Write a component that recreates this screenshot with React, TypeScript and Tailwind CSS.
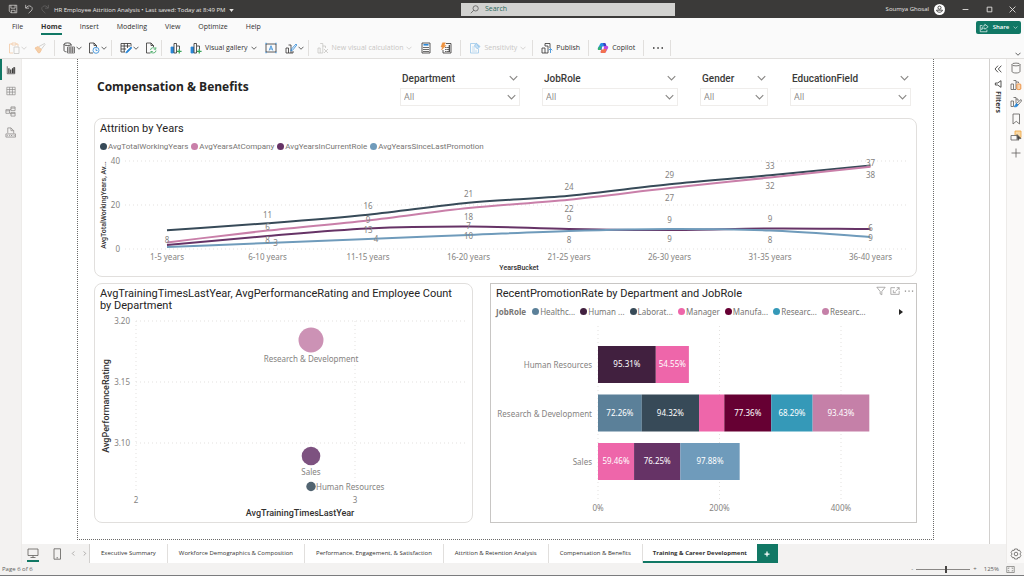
import type { ReactNode } from "react"

const UI = "font-['Open_Sans','Noto_Sans',sans-serif]"

function Icon({ children, className = "size-3", box = 12 }: { children: ReactNode; className?: string; box?: number }) {
  return (
    <svg viewBox={`0 0 ${box} ${box}`} className={`shrink-0 ${className}`} fill="none" stroke="currentColor" strokeWidth="0.8" aria-hidden="true">
      {children}
    </svg>
  )
}

function Chevron({ className = "w-[6px] h-[4px]" }: { className?: string }) {
  return (
    <svg viewBox="0 0 12 8" className={`shrink-0 ${className}`} fill="none" stroke="currentColor" strokeWidth="1.500" aria-hidden="true">
      <path d="M1 1.500 6 6.500 11 1.500" />
    </svg>
  )
}

/* ---------- icons ---------- */

const SaveIcon = () => (
  <Icon className="size-[10px]">
    <path d="M1.500 1.500h9v9h-7l-2-2zM3.500 1.500v3.500h5V1.500M4 10.500V7.500h4.500v3" />
  </Icon>
)
const UndoIcon = () => (
  <Icon className="size-[10px]">
    <path d="M2 1v4h4M2.200 4.800C4 2.200 6.500 1.600 8.500 3s1.700 3.800 0 5.400L5.500 11" />
  </Icon>
)
const RedoIcon = () => (
  <Icon className="size-[10px] text-[#6b6a69]">
    <path d="M10 1v4H6M9.800 4.800C8 2.200 5.500 1.600 3.500 3s-1.700 3.800 0 5.400L6.500 11" />
  </Icon>
)
const PasteIcon = () => (
  <Icon>
    <path d="M4 2H1.500v9H5M8 2h2v2.500M4 1h4v2H4z" stroke="#f3c9a5" />
    <path d="M6 5h5v6.500H6z" stroke="#c8c6c4" />
  </Icon>
)
const BrushIcon = () => (
  <Icon>
    <path d="M1 6l3-1.500 3.500 3L6 10.500 4.500 11z" fill="#f6cfa8" stroke="#f0c096" />
    <path d="M5 4.500 10.500 1.500 11 2.500 7.500 7" stroke="#c8c6c4" />
  </Icon>
)
const GetDataIcon = () => (
  <Icon>
    <ellipse cx="4.500" cy="2.200" rx="3.500" ry="1.300" />
    <path d="M1 2.200v6.300c0 .8 1.200 1.200 2.500 1.300M8 2.200v2" />
    <path d="M4.500 5h7v6h-7zM4.500 7h7M4.500 9h7M7 5v6M9.300 5v6" strokeWidth=".6" />
  </Icon>
)
const RecentIcon = () => (
  <Icon>
    <path d="M5 11H1.500V1H6l2.500 2.500V5M6 1v2.500h2.500" />
    <circle cx="8" cy="8.300" r="3" stroke="#2b88d8" />
    <path d="M8 6.500v2h1.500" stroke="#2b88d8" />
  </Icon>
)
const TransformIcon = () => (
  <Icon>
    <path d="M1 1.500h10v3M1 1.500V10h4M1 4h9M1 7h5M4.200 1.500V10M7.500 1.500V6" />
    <path d="M11 5 6.500 9.500 5.800 11l1.600-.6L11.800 6z" fill="#2b88d8" stroke="#2b88d8" />
  </Icon>
)
const RefreshIcon = () => (
  <Icon>
    <path d="M5 11H1.500V1H6l2.500 2.500V5M6 1v2.500h2.500" />
    <path d="M5.500 8a2.700 2.700 0 0 1 5-1M10.800 5.200V7.200H8.800M11 8.500a2.700 2.700 0 0 1-5 1.200M5.800 11.500V9.500h2" stroke="#3ba55c" />
  </Icon>
)
const NewVisualIcon = () => (
  <Icon>
    <path d="M1 5h2.600v6H1z" fill="#2b88d8" stroke="#2b88d8" />
    <path d="M4 1.500h2.500V11H4zM7 4h2.500v3" />
    <path d="M9.300 7v4.500M7 9.300h4.600" stroke="#3ba55c" strokeWidth="1.300" />
  </Icon>
)
const TextBoxIcon = () => (
  <Icon>
    <path d="M1 2h10v8H1z" />
    <path d="M4.200 8.500 6 3.700 7.800 8.500M4.800 7h2.400" stroke="#2b88d8" />
    <path d="M.5 1.500h1M10.500 1.500h1M.5 10.500h1M10.500 10.500h1" stroke="#2b88d8" strokeWidth="1.500" />
  </Icon>
)
const ShapesIcon = () => (
  <Icon>
    <path d="M1 6h2.500v5H1zM3.500 3H6v8H3.500M8 9v2H6" />
    <path d="M11 2 6.500 7 5.800 9l1.800-.8L11.800 3z" stroke="#2b88d8" />
  </Icon>
)
const VisualCalcIcon = () => (
  <Icon>
    <path d="M1 6h2.200v5H1zM3.200 1.500h2.600V11H3.200M8.500 6V4H5.800" />
    <path d="m7 7 4 4M11 7l-4 4" />
  </Icon>
)
const CalculatorIcon = () => (
  <Icon>
    <path d="M2 1h8v10H2z" />
    <path d="M3.500 2.800h5" stroke="#2b88d8" strokeWidth="1.600" />
    <path d="M3.300 5.500h1.400M5.300 5.500h1.400M7.300 5.500h1.400M3.300 7.500h1.400M5.300 7.500h1.400M7.300 7.500h1.400M3.300 9.500h1.400M5.300 9.500h1.400M7.300 9.500h1.400" strokeWidth="1.100" />
  </Icon>
)
const QuickMeasureIcon = () => (
  <Icon>
    <path d="M6 1.500h5v9.500H3V8" />
    <path d="M5.300 5.500h1.200M7.300 5.500h1.200M5.300 7.500h1.200M7.300 7.500h1.200M5.300 9.500h1.200M7.300 9.500h1.200M9.300 3v7" strokeWidth="1.100" />
    <path d="M2.500.8h3L4 3.500h2L1.500 8l1-3H1z" fill="#f0953f" stroke="#e8822a" strokeWidth=".4" />
  </Icon>
)
const SensitivityIcon = () => (
  <Icon>
    <path d="M6 1.500H1.500v9.500h8V7" stroke="#9cc8ea" />
    <path d="M3 5h3M3 7h3M3 9h5" stroke="#b5d6ef" />
    <path d="m7 1 4 3.500L8.500 7 5.500 4zM8 2.500 10 5" fill="#c7e0f4" stroke="#8fc1e8" />
  </Icon>
)
const PublishIcon = () => (
  <Icon>
    <path d="M1 6h3v5H1zM4 4h3v7H4M4 4V1.500h5V6" />
    <path d="M9.500 11V6.500M7.700 8.300l1.800-1.800 1.800 1.800" stroke="#2b88d8" />
  </Icon>
)
const CopilotIcon = () => (
  <Icon>
    <path d="M3 2.200C3.600 1.200 4 1 5 1h2.500c.8 0 1 .6.700 1.500L7 6.500 4.500 8H1.800C.8 8 .6 7 .9 6z" fill="#2a8fe6" stroke="none" />
    <path d="M1 6.500 2 4.500h2.500L3.500 8H1.800C1 8 .7 7.300 1 6.500z" fill="#35b26b" stroke="none" />
    <path d="M7.500 1c.8 0 1.200.5 1.500 1.500l.5 1.500H7L6 1z" fill="#3a3fc4" stroke="none" />
    <path d="M9 9.800C8.500 10.800 8 11 7 11H4.500c-.8 0-1-.6-.7-1.500L5 5.500 7.500 4h2.700c1 0 1.200 1 .9 2z" fill="#c04adf" stroke="none" />
    <path d="M4 8.500 5 7h4.500L9 9.800C8.500 10.800 8 11 7 11H4.500C3.500 11 3.500 9.500 4 8.500z" fill="#f2724f" stroke="none" />
    <path d="M5.200 4.500h1.800L6.500 7.500H4.800z" fill="#fff" stroke="none" />
  </Icon>
)
const ShareIcon = () => (
  <Icon className="size-[10px]">
    <path d="M4 3H1.500v7.500h8V8M7 1.500l4 3-4 3V6C5 6 4 6.500 3.200 8 3.400 5 4.800 3.300 7 3.200z" />
  </Icon>
)
const ReportViewIcon = () => (
  <Icon className="size-[10px] text-[#3b3a39]">
    <path d="M1.500 1.500v9h9V3" />
    <path d="M3.500 10V4M5.700 10V5.500M7.900 10V4M9.700 10V2.500" strokeWidth="1.500" />
  </Icon>
)
const TableViewIcon = () => (
  <Icon className="size-[10px]">
    <path d="M1 1.500h10v9H1zM1 4.200h10M1 7.300h10M4.300 1.500v9M7.700 1.500v9" />
  </Icon>
)
const ModelViewIcon = () => (
  <Icon className="size-[11px]">
    <path d="M6.500 1h4.500v4H6.500zM6.500 7h4.500v4H6.500zM1 4h4v4H1zM5 5l1.500-2M5 7l1.500 2M6.500 2.300H11M6.500 8.300H11M1 5.300h4" />
  </Icon>
)
const DaxViewIcon = () => (
  <Icon className="size-[11px]">
    <path d="M3 6.500V1h3.500L9.500 4v3M6.500 1v3h3M1 7.500h10.500V11H1z" />
    <path d="M2.500 8.500v1.500M5 8.500v1.500M6.500 8.500l1.500 1.500M8 8.500 6.500 10M10 8.500v1.500" />
  </Icon>
)
const DataPaneIcon = () => (
  <Icon>
    <ellipse cx="6" cy="2.500" rx="4" ry="1.400" />
    <path d="M2 2.500v7c0 .8 1.800 1.500 4 1.500s4-.7 4-1.500v-7" />
  </Icon>
)
const BuildIcon = () => (
  <Icon>
    <path d="M1 5h2.500v5.500H1zM3.500 1.500H6v9H3.500M8.500 4V3H6" />
    <path d="M6.800 5.500c0-.8 4-.8 4 0v4.500c0 .8-4 .8-4 0z" fill="#f9d3ae" stroke="#e8822a" />
  </Icon>
)
const FormatIcon = () => (
  <Icon>
    <path d="M1 5h2.500v5.500H1zM3.500 1.500H6v6M6 3h2v2" />
    <path d="M11 3.500 6.500 7.500 8 9l3.500-4z" />
    <path d="M6.500 7.500 8 9c-.5 1.800-2.300 2-4 1.700C5.500 10 5.300 8.500 6.500 7.500z" fill="#2b88d8" stroke="#2b88d8" />
  </Icon>
)
const BookmarkIcon = () => (
  <Icon>
    <path d="M3 1h6.500v10L6.200 8.300 3 11z" />
  </Icon>
)
const SelectionIcon = () => (
  <Icon>
    <path d="M5 1h6v6.500H5z" fill="#fad9a5" stroke="#eda33c" />
    <path d="M1 5.500h6V10H1z" fill="#faf9f8" />
    <path d="m7 4.500 4 4-2 .2L8 10.500z" fill="#444" />
  </Icon>
)
const GearIcon = () => (
  <Icon className="size-[12px]">
    <path d="M4.600 1h2.800l.5 1.500 1.600-.3 1.400 2.400L9.900 6l1 1.400-1.400 2.400-1.600-.3L7.400 11H4.600l-.5-1.500-1.600.3L1.100 7.400 2.100 6l-1-1.400 1.400-2.400 1.600.3z" />
    <circle cx="6" cy="6" r="1.800" />
  </Icon>
)

/* ---------- title bar and ribbon ---------- */

function TitleBar() {
  return (
    <header className="flex h-[18px] items-center bg-[#3b3a39] text-[6px] text-[#e8e6e4]">
      <div className="flex flex-[462_1_0] items-center pl-2">
        <button aria-label="Save"><SaveIcon /></button>
        <button aria-label="Undo" className="ml-[6px]"><UndoIcon /></button>
        <button aria-label="Redo" className="ml-[6px]"><RedoIcon /></button>
        <button className="ml-1 flex items-center gap-1 whitespace-nowrap pt-[3px]">
          HR Employee Attrition Analysis • Last saved: Today at 8:49 PM
          <svg viewBox="0 0 6 4" className="h-[3px] w-[5px]" fill="currentColor"><path d="M0 0h6L3 4z" /></svg>
        </button>
      </div>
      <label className="flex h-[13px] w-[214px] items-center gap-[6px] bg-[#d2d2d0] pl-[9px]">
        <svg viewBox="0 0 12 12" className="size-[9px] shrink-0 text-[#555]" fill="none" stroke="currentColor" aria-hidden="true">
          <circle cx="7.500" cy="4.500" r="3.500" />
          <path d="M5 7 1 11" />
        </svg>
        <input aria-label="Search" placeholder="Search" className="min-w-0 flex-1 bg-transparent text-[7px] outline-none placeholder:text-[#2b6a5e]" />
      </label>
      <div className="flex flex-[348_1_0] items-center justify-end pr-[8px]">
        <span>Soumya Ghosal</span>
        <svg viewBox="0 0 12 12" className="ml-[5px] size-[11px]" fill="none" stroke="#3b3a39" aria-hidden="true">
          <circle cx="6" cy="6" r="6" fill="#fff" stroke="none" />
          <circle cx="6" cy="4" r="1.700" />
          <path d="M2.800 6.700h6.400c0 3-6.400 3-6.400 0z" />
        </svg>
        <button aria-label="Minimize" className="ml-[17px]"><Icon className="size-[7px]"><path d="M1 6h10" strokeWidth="1.500" /></Icon></button>
        <button aria-label="Maximize" className="ml-[17px]"><Icon className="size-[7px]"><path d="M2 2h8v8H2z" strokeWidth="1.500" /></Icon></button>
        <button aria-label="Close" className="ml-[16px]"><Icon className="size-[7px]"><path d="m1 1 10 10M11 1 1 11" strokeWidth="1.500" /></Icon></button>
      </div>
    </header>
  )
}

const menus = ["File", "Home", "Insert", "Modeling", "View", "Optimize", "Help"]

function Tool({ label, icon, text, menu, disabled }: { label: string; icon: ReactNode; text?: string; menu?: boolean; disabled?: boolean }) {
  return (
    <button aria-label={label} disabled={disabled} className="flex items-center gap-px whitespace-nowrap disabled:text-[#c8c6c4]">
      {icon}
      {text && <span className="px-[2px]">{text}</span>}
      {menu && <Chevron />}
    </button>
  )
}

function Group({ children, className = "gap-[7px] pr-2" }: { children: ReactNode; className?: string }) {
  return <div className={`flex h-4 items-center border-r border-[#e1dfdd] pl-2 ${className}`}>{children}</div>
}

function Ribbon() {
  return (
    <div className="border-b border-[#e1dfdd] bg-[#fafafa] text-[7px] text-[#323130]">
      <div className="flex h-[19px] items-center justify-between pl-[12px] pr-[3px]">
        <nav className="flex gap-[18px]">
          {menus.map((m) => (
            <a key={m} href="#" className={m === "Home" ? "border-b-2 border-[#117865] font-bold leading-[13px]" : "border-b-2 border-transparent leading-[13px]"}>
              {m}
            </a>
          ))}
        </nav>
        <button className="flex h-[13px] w-[45px] items-center justify-center gap-[4px] rounded-xs bg-[#117865] text-[6px] font-semibold text-white">
          <ShareIcon />
          Share
          <Chevron className="h-[3px] w-[5px]" />
        </button>
      </div>
      <div className="flex h-[21px] items-center pt-px">
        <Group>
          <Tool label="Paste" icon={<PasteIcon />} menu disabled />
          <Tool label="Format painter" icon={<BrushIcon />} disabled />
        </Group>
        <Group className="gap-[6px] pr-1">
          <Tool label="Get data" icon={<GetDataIcon />} menu />
          <Tool label="Recent sources" icon={<RecentIcon />} menu />
        </Group>
        <Group className="gap-[6px] pr-1">
          <Tool label="Transform data" icon={<TransformIcon />} menu />
          <Tool label="Refresh" icon={<RefreshIcon />} />
        </Group>
        <Group className="gap-2 pr-1">
          <Tool label="New visual" icon={<NewVisualIcon />} />
          <Tool label="Visual gallery" icon={<NewVisualIcon />} text="Visual gallery" menu />
          <Tool label="Text box" icon={<TextBoxIcon />} />
          <Tool label="Shapes" icon={<ShapesIcon />} menu />
        </Group>
        <Group className="gap-2 pr-2">
          <Tool label="New visual calculation" icon={<VisualCalcIcon />} text="New visual calculation" menu disabled />
          <Tool label="New measure" icon={<CalculatorIcon />} />
          <Tool label="Quick measure" icon={<QuickMeasureIcon />} />
        </Group>
        <Group className="pr-[6px]">
          <Tool label="Sensitivity" icon={<SensitivityIcon />} text="Sensitivity" menu disabled />
        </Group>
        <Group className="pr-[6px]">
          <Tool label="Publish" icon={<PublishIcon />} text="Publish" />
        </Group>
        <Group className="pr-[6px]">
          <Tool label="Copilot" icon={<CopilotIcon />} text="Copilot" />
        </Group>
        <Group className="pr-[6px]">
          <Tool label="More" icon={<Icon><path d="M1 6h1.500M5.300 6h1.500M9.500 6H11" strokeWidth="1.600" /></Icon>} />
        </Group>
        <button aria-label="Collapse ribbon" className="ml-auto mr-[3px] self-end pb-[2px]"><Chevron /></button>
      </div>
    </div>
  )
}

/* ---------- report page ---------- */

const slicers = [
  { name: "Department", width: "w-[120px]" },
  { name: "JobRole", width: "w-[136px]" },
  { name: "Gender", width: "w-[68px]" },
  { name: "EducationField", width: "w-[121px]" },
]

function Slicer({ name, width }: { name: string; width: string }) {
  return (
    <div className={width}>
      <div className="flex h-[20px] items-center justify-between px-[2px] text-[#8a8886]">
        <label htmlFor={name} className="font-['Roboto',sans-serif] text-[10px] font-medium text-[#3b3a39]">{name}</label>
        <Chevron className="h-[6px] w-[9px]" />
      </div>
      <div className="relative flex h-[18px] items-center border border-[#efedeb] text-[#8a8886]">
        <select id={name} className="h-full w-full appearance-none bg-transparent pl-[3px] text-[9px] outline-none">
          <option>All</option>
        </select>
        <Chevron className="pointer-events-none absolute right-[3px] h-[6px] w-[9px]" />
      </div>
    </div>
  )
}

const titleStyle = "font-['Roboto',sans-serif] text-[11px] leading-[12px] text-[#252423] pt-[4px]"
const chartText = "font-['Noto_Sans',sans-serif] text-[8px]"

function Dot({ color }: { color: string }) {
  return <span className="size-[7px] shrink-0 rounded-full" style={{ background: color }} />
}

const X0 = 72
const STEP = 100.5
const ZERO = 94
const PER_UNIT = 2.2

const series = [
  { name: "AvgTotalWorkingYears", color: "#374a58", values: [8.5, 11.7, 15.6, 21, 24.2, 29.4, 33.5, 38] },
  { name: "AvgYearsAtCompany", color: "#c97fa9", values: [3, 8.4, 13, 18.6, 22.4, 27.7, 32.5, 37.4] },
  { name: "AvgYearsInCurrentRole", color: "#663366", values: [1.8, 5.9, 9.3, 10.2, 9.1, 8.6, 9.3, 9.1] },
  { name: "AvgYearsSinceLastPromotion", color: "#6f9bbb", values: [0.9, 2.7, 4.6, 6.4, 8.2, 9.1, 8.4, 5.5] },
]

const buckets = ["1-5 years", "6-10 years", "11-15 years", "16-20 years", "21-25 years", "26-30 years", "31-35 years", "36-40 years"]

// [text, y, x shift] for each bucket
const pointLabels: [string, number, number?][][] = [
  [["8", 88]],
  [["11", 63], ["6", 75], ["8", 88], ["3", 91, 8]],
  [["16", 54], ["9", 68], ["13", 78], ["4", 87, 8]],
  [["21", 42], ["18", 65], ["7", 74], ["10", 84]],
  [["24", 35], ["22", 57], ["9", 67], ["8", 88]],
  [["29", 23], ["27", 46], ["9", 68], ["9", 87]],
  [["33", 14], ["32", 34], ["9", 67], ["8", 88]],
  [["37", 11], ["38", 23], ["6", 76], ["9", 86]],
]

function smoothPath(values: number[]) {
  const pts = values.map((v, i) => [X0 + i * STEP, ZERO - v * PER_UNIT])
  const slope = (i: number) => {
    const a = Math.max(0, i - 1)
    const b = Math.min(pts.length - 1, i + 1)
    return (pts[b][1] - pts[a][1]) / (pts[b][0] - pts[a][0])
  }
  let d = `M${pts[0][0]} ${pts[0][1]}`
  for (let i = 1; i < pts.length; i++) {
    const [px, py] = pts[i - 1]
    const [x, y] = pts[i]
    const h = STEP / 3
    d += `C${px + h} ${py + slope(i - 1) * h} ${x - h} ${y - slope(i) * h} ${x} ${y}`
  }
  return d
}

function AttritionCard() {
  return (
    <section className="rounded-lg border border-[#e1dfdd] bg-white">
      <h2 className={`${titleStyle} px-[5px]`}>Attrition by Years</h2>
      <ul className="flex h-[20px] items-center gap-[3px] px-[5px] pt-[3px] font-['Roboto',sans-serif] text-[8px] text-[#777573]">
        {series.map((s) => (
          <li key={s.name} className="flex items-center gap-px">
            <Dot color={s.color} />
            {s.name}
          </li>
        ))}
      </ul>
      <svg viewBox="0 0 821 121" className={`block w-full ${chartText}`} fill="#858381" role="img" aria-label="Attrition by Years">
        {[0, 20, 40].map((t) => (
          <g key={t}>
            <line x1="30" x2="814" y1={ZERO - t * PER_UNIT} y2={ZERO - t * PER_UNIT} stroke="#e3e1df" strokeDasharray="1 3" />
            <text x="25" y={ZERO + 3 - t * PER_UNIT} textAnchor="end">{t}</text>
          </g>
        ))}
        {series.map((s) => (
          <path key={s.name} d={smoothPath(s.values)} fill="none" stroke={s.color} strokeWidth="2" />
        ))}
        {pointLabels.map((labels, i) =>
          labels.map(([text, y, dx = 0]) => (
            <text key={text + y} x={X0 + i * STEP + dx} y={y} textAnchor="middle">{text}</text>
          )),
        )}
        {buckets.map((b, i) => (
          <text key={b} x={X0 + i * STEP} y="105" textAnchor="middle">{b}</text>
        ))}
        <text x="424" y="115" textAnchor="middle" className="font-['Roboto',sans-serif] text-[7px] font-medium" fill="#323130">YearsBucket</text>
        <text transform="translate(11 50) rotate(-90)" textAnchor="middle" className="font-['Roboto',sans-serif] text-[7px] font-medium" fill="#323130">AvgTotalWorkingYears, Av...</text>
      </svg>
    </section>
  )
}

function TrainingCard() {
  return (
    <section className="rounded-lg border border-[#e1dfdd] bg-white">
      <h2 className={`${titleStyle} pl-[5px] pr-3`}>AvgTrainingTimesLastYear, AvgPerformanceRating and Employee Count by Department</h2>
      <svg viewBox="0 1 377 210" className={`block w-full ${chartText}`} fill="#858381" role="img" aria-label="Training times and performance rating by department">
        {["3.20", "3.15", "3.10"].map((t, i) => (
          <g key={t}>
            <line x1="41" x2="370" y1={10 + i * 61} y2={10 + i * 61} stroke="#e3e1df" strokeDasharray="1 3" />
            <text x="35" y={13 + i * 61} textAnchor="end">{t}</text>
          </g>
        ))}
        {["2", "3"].map((t, i) => (
          <g key={t}>
            <line x1={41 + i * 219} x2={41 + i * 219} y1="10" y2="182" stroke="#e3e1df" strokeDasharray="1 3" />
            <text x={41 + i * 219} y="192" textAnchor="middle">{t}</text>
          </g>
        ))}
        <circle cx="216" cy="29" r="12.500" fill="#cc92b5" />
        <text x="216" y="51" textAnchor="middle">Research &amp; Development</text>
        <circle cx="216" cy="145" r="9.300" fill="#7d5280" />
        <text x="216" y="164" textAnchor="middle">Sales</text>
        <circle cx="216" cy="175.500" r="4.700" fill="#526471" />
        <text x="221" y="179">Human Resources</text>
        <text x="205" y="205" textAnchor="middle" className="font-['Roboto',sans-serif] text-[9px] font-medium" fill="#323130">AvgTrainingTimesLastYear</text>
        <text transform="translate(14 95) rotate(-90)" textAnchor="middle" className="font-['Roboto',sans-serif] text-[9px] font-medium" fill="#323130">AvgPerformanceRating</text>
      </svg>
    </section>
  )
}

const roles = [
  { name: "Healthc...", color: "#5b8099" },
  { name: "Human ...", color: "#41203f" },
  { name: "Laborat...", color: "#374a58" },
  { name: "Manager", color: "#ee66aa" },
  { name: "Manufa...", color: "#660033" },
  { name: "Researc...", color: "#3599b8" },
  { name: "Researc...", color: "#c580a8" },
]

const PCT = 0.6065

const departments = [
  { name: "Human Resources", parts: [[95.31, "#41203f"], [54.55, "#ee66aa"]] },
  { name: "Research & Development", parts: [[72.26, "#5b8099"], [94.32, "#374a58"], [41.67, "#ee66aa", false], [77.36, "#660033"], [68.29, "#3599b8"], [93.43, "#c580a8"]] },
  { name: "Sales", parts: [[59.46, "#ee66aa"], [76.25, "#663366"], [97.88, "#6f9bbb"]] },
] as { name: string; parts: [number, string, boolean?][] }[]

function PromotionCard() {
  return (
    <section className="relative border border-[#c8c6c4] bg-white">
      <h2 className={`${titleStyle} px-[5px]`}>RecentPromotionRate by Department and JobRole</h2>
      <div className="absolute right-[2px] top-[2px] flex items-center gap-[4px] text-[#8a8886]">
        <button aria-label="Filters on this visual"><Icon className="size-[10px]"><path d="M1 1.500h10L7 6.500v4L5 9.500v-3z" /></Icon></button>
        <button aria-label="Focus mode"><Icon className="size-[10px]"><path d="M6 2H1v8h10V6M8 2h3v3M11 2 6.500 6.500M4 5v3h3" /></Icon></button>
        <button aria-label="More options"><Icon className="size-[10px]"><path d="M1 6h1.500M5.300 6h1.500M9.500 6H11" strokeWidth="1.500" /></Icon></button>
      </div>
      <div className={`flex h-[20px] items-center px-[5px] pt-[3px] text-[#777573] ${chartText}`}>
        <span className="mr-[6px] font-bold">JobRole</span>
        <ul className="flex flex-1 items-center gap-[5px]">
          {roles.map((r, i) => (
            <li key={i} className="flex items-center gap-px whitespace-nowrap">
              <Dot color={r.color} />
              {r.name}
            </li>
          ))}
        </ul>
        <button aria-label="Next legend page" className="mr-[8px] text-[#252423]">
          <svg viewBox="0 0 4 6" className="h-[6px] w-[4px]" fill="currentColor"><path d="M0 0 4 3 0 6z" /></svg>
        </button>
      </div>
      <svg viewBox="0 0 425 202" className={`block w-full ${chartText}`} fill="#858381" role="img" aria-label="Recent promotion rate by department">
        {["0%", "200%", "400%"].map((t, i) => (
          <g key={t}>
            <line x1={107 + i * 121.5} x2={107 + i * 121.5} y1="6" y2="182" stroke="#e3e1df" strokeDasharray="1 3" />
            <text x={107 + i * 121.5} y="191" textAnchor="middle">{t}</text>
          </g>
        ))}
        {departments.map((d, row) => {
          const y = 26 + row * 48.5
          let x = 107
          return (
            <g key={d.name}>
              <text x="101" y={y + 22} textAnchor="end">{d.name}</text>
              {d.parts.map(([value, color, labelled = true]) => {
                const w = value * PCT
                const left = x
                x += w
                return (
                  <g key={value}>
                    <rect x={left} y={y} width={w} height="37" fill={color} />
                    {labelled && <text x={left + w / 2} y={y + 21} textAnchor="middle" fill="#fff">{value}%</text>}
                  </g>
                )
              })}
            </g>
          )
        })}
      </svg>
    </section>
  )
}

function ReportPage() {
  return (
    <div className="mx-[55px] border border-t-0 border-dotted border-[#6b6a69] px-4 pb-4">
      <div className="flex h-[59px] items-start justify-between gap-4 pl-[3px] pr-[6px]">
        <h1 className="whitespace-nowrap pt-[18px] text-[12px] font-bold leading-[20px] text-[#252423]">Compensation &amp; Benefits</h1>
        <div className="flex gap-[22px] pt-[9px]">
          {slicers.map((s) => <Slicer key={s.name} {...s} />)}
        </div>
      </div>
      <AttritionCard />
      <div className="mt-[6px] grid grid-cols-[379fr_427fr] gap-[17px]">
        <TrainingCard />
        <PromotionCard />
      </div>
    </div>
  )
}

/* ---------- bottom ---------- */

const pages = [
  "Executive Summary",
  "Workforce Demographics & Composition",
  "Performance, Engagement, & Satisfaction",
  "Attrition & Retention Analysis",
  "Compensation & Benefits",
  "Training & Career Development",
]

function PageTabs() {
  return (
    <div className="mt-auto flex h-[19px] items-stretch bg-[#f3f2f1] text-[6px] text-[#323130]">
      <div className="flex w-[68px] items-center border-r border-[#d2d0ce] pl-[5px] text-[#605e5c]">
        <button aria-label="Desktop layout" className="flex h-[17px] items-center border-b-2 border-[#117865]">
          <Icon className="size-[12px]"><path d="M1 2h10v6.500H1zM6 8.500v2M3.500 10.500h5" /></Icon>
        </button>
        <button aria-label="Mobile layout" className="ml-[12px]"><Icon className="size-[12px]"><path d="M3 .8h6.500v10.400H3zM5.500 9.800h1.500" /></Icon></button>
        <button aria-label="Previous page" className="ml-[8px]"><Icon className="size-[5px] text-[#a19f9d]"><path d="M8 1 3 6l5 5" strokeWidth="2" /></Icon></button>
        <button aria-label="Next page" className="ml-[6px]"><Icon className="size-[5px] text-[#a19f9d]"><path d="m4 1 5 5-5 5" strokeWidth="2" /></Icon></button>
      </div>
      {pages.map((p) => (
        <button
          key={p}
          className={
            p === "Training & Career Development"
              ? "whitespace-nowrap border-b-2 border-[#117865] bg-white px-[10px] pt-[2px] font-bold"
              : "whitespace-nowrap border-r border-[#e1dfdd] bg-white px-[11px]"
          }
        >
          {p}
        </button>
      ))}
      <button aria-label="New page" className="flex w-[21px] items-center justify-center bg-[#117865] text-white">
        <Icon className="size-[6px]"><path d="M6 1v10M1 6h10" strokeWidth="2.500" /></Icon>
      </button>
    </div>
  )
}

function StatusBar() {
  return (
    <footer className="flex h-[13px] items-center justify-between border-b border-[#7a7b7d] bg-[#f3f2f1] pl-[2px] pr-[9px] text-[6px] text-[#605e5c]">
      <span>Page 6 of 6</span>
      <div className="flex items-center">
        <button aria-label="Zoom out">-</button>
        <input type="range" aria-label="Zoom" min="10" max="200" defaultValue="115" className="mx-[3px] h-[7px] w-[54px] appearance-none bg-[linear-gradient(#8a8886,#8a8886)] bg-[length:100%_1px] bg-center bg-no-repeat [&::-webkit-slider-thumb]:h-[7px] [&::-webkit-slider-thumb]:w-[2px] [&::-webkit-slider-thumb]:appearance-none [&::-webkit-slider-thumb]:bg-[#484644]" />
        <button aria-label="Zoom in">+</button>
        <span className="ml-[7px]">125%</span>
        <button aria-label="Fit to page" className="ml-[7px]"><Icon className="size-[9px]"><path d="M1 2h10v8H1zM3 5V4h1.500M7.500 4H9v1M9 7v1H7.500M4.500 8H3V7" /></Icon></button>
      </div>
    </footer>
  )
}

export default function App() {
  return (
    <div className={`flex min-h-screen flex-col bg-white ${UI}`}>
      <TitleBar />
      <Ribbon />
      <div className="flex flex-1">
        <nav className="flex w-[22px] flex-col border-r border-[#edebe9] bg-[#f3f2f1] text-[#8a8886]">
          <button aria-label="Report view" className="flex h-[21px] items-center justify-center border-l-2 border-[#117865] pr-[2px]"><ReportViewIcon /></button>
          <button aria-label="Table view" className="flex h-[21px] items-center justify-center"><TableViewIcon /></button>
          <button aria-label="Model view" className="flex h-[21px] items-center justify-center"><ModelViewIcon /></button>
          <button aria-label="DAX query view" className="flex h-[21px] items-center justify-center"><DaxViewIcon /></button>
        </nav>
        <div className="flex min-w-0 flex-1 flex-col">
          <div className="flex flex-1">
            <main className="min-w-0 flex-1"><ReportPage /></main>
            <aside className="flex w-[17px] flex-col items-center border-l border-[#d2d0ce] pt-[6px] text-[#3b3a39]">
              <button aria-label="Expand filters"><Icon className="size-[8px]"><path d="M6 1 1.500 6 6 11M11 1 6.500 6 11 11" strokeWidth="1.300" /></Icon></button>
              <Icon className="mt-[7px] size-[8px]"><path d="M10.500 1v10L5.500 7.500H2v-3h3.500z" strokeWidth="1.300" /></Icon>
              <h2 className="mt-[3px] text-[7px] font-bold leading-[10px] [writing-mode:vertical-rl]">Filters</h2>
            </aside>
          </div>
          <PageTabs />
        </div>
        <aside className="flex w-[18px] flex-col items-center gap-[5px] border-l border-[#edebe9] bg-[#faf9f8] pb-[3px] pt-[3px] text-[#605e5c]">
          <button aria-label="Data"><DataPaneIcon /></button>
          <button aria-label="Build a visual"><BuildIcon /></button>
          <button aria-label="Format"><FormatIcon /></button>
          <button aria-label="Bookmarks"><BookmarkIcon /></button>
          <button aria-label="Selection"><SelectionIcon /></button>
          <button aria-label="Add pane"><Icon><path d="M6 1.500v9M1.500 6h9" /></Icon></button>
          <button aria-label="Settings" className="mt-auto"><GearIcon /></button>
        </aside>
      </div>
      <StatusBar />
    </div>
  )
}
